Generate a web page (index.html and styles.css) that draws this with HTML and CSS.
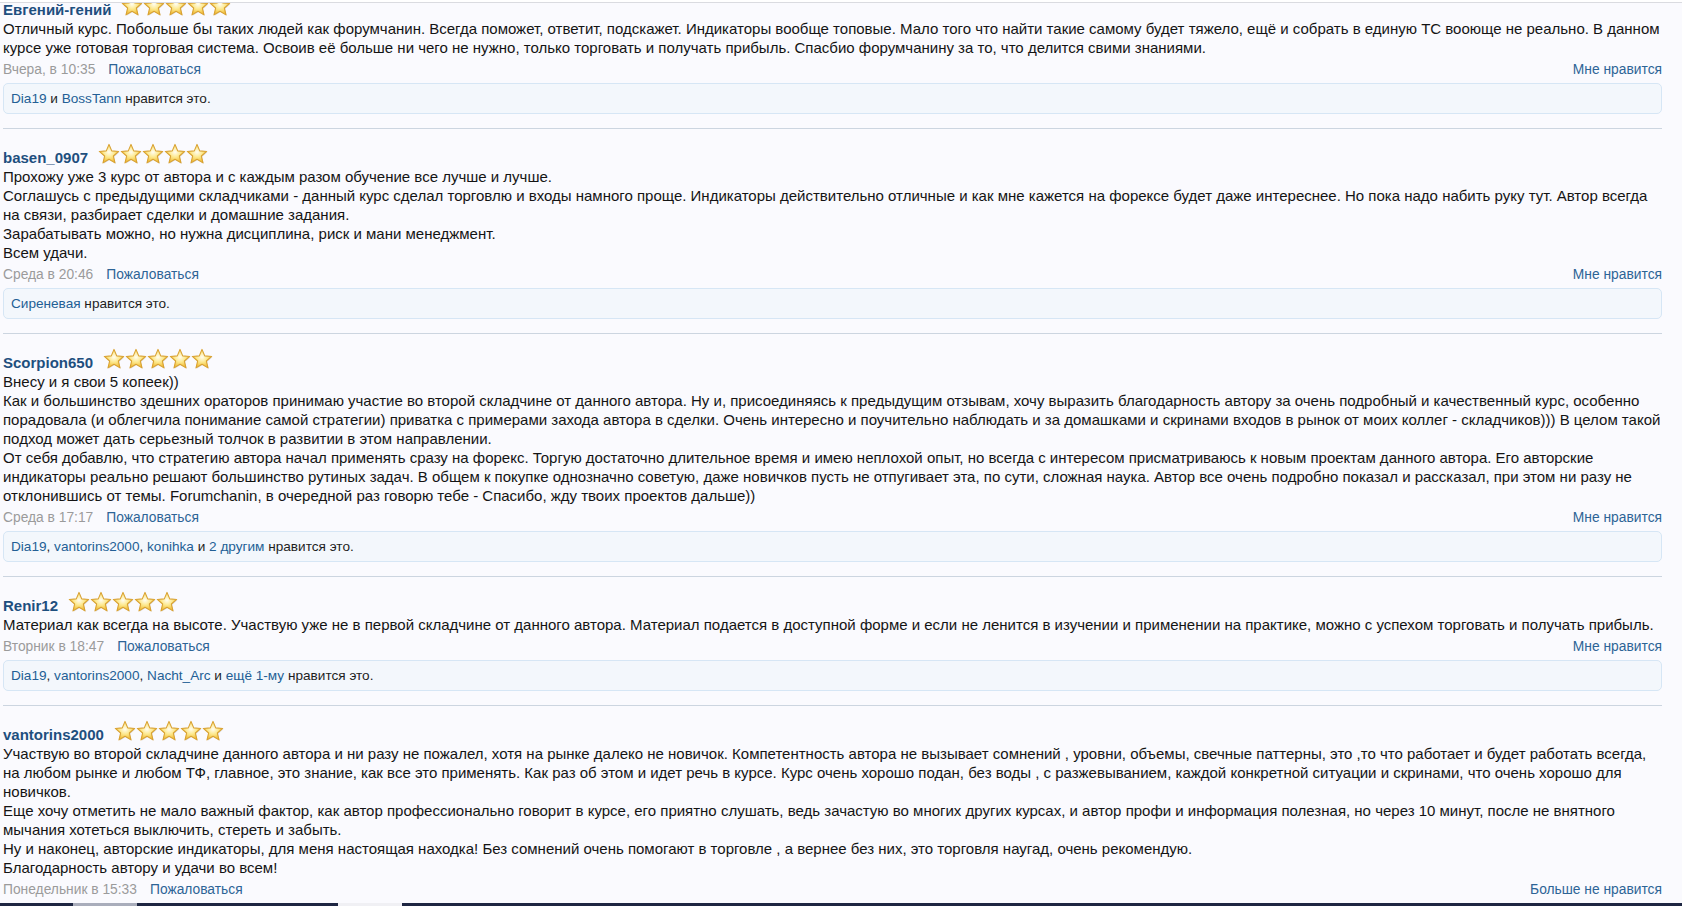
FILE: index.html
```html
<!DOCTYPE html>
<html lang="ru">
<head>
<meta charset="utf-8">
<title>Отзывы</title>
<link rel="stylesheet" href="styles.css">
</head>
<body>
<svg class="defs" width="0" height="0" aria-hidden="true">
  <defs>
    <radialGradient id="starFill" cx="0.5" cy="0.42" r="0.6">
      <stop offset="0" stop-color="#fffdf2"/>
      <stop offset="0.45" stop-color="#fde98f"/>
      <stop offset="1" stop-color="#f0b628"/>
    </radialGradient>
    <symbol id="star" viewBox="0 0 22 22">
      <polygon points="11,1.4 13.7,7.88 20.7,8.45 15.38,13.02 17,19.85 11,16.2 5,19.85 6.62,13.02 1.3,8.45 8.3,7.88" fill="#000" opacity="0.12" transform="translate(0.7 0.9)"/>
      <polygon points="11,1.4 13.7,7.88 20.7,8.45 15.38,13.02 17,19.85 11,16.2 5,19.85 6.62,13.02 1.3,8.45 8.3,7.88" fill="url(#starFill)" stroke="#d9a232" stroke-width="1.1" stroke-linejoin="round"/>
    </symbol>
  </defs>
</svg>

<div class="topline"></div>

<main class="thread">
  <article class="msg">
    <div class="head"><a class="user" href="#">Евгений-гений</a><span class="stars"><svg><use href="#star"/></svg><svg><use href="#star"/></svg><svg><use href="#star"/></svg><svg><use href="#star"/></svg><svg><use href="#star"/></svg></span></div>
    <div class="body">Отличный курс. Побольше бы таких людей как форумчанин. Всегда поможет, ответит, подскажет. Индикаторы вообще топовые. Мало того что найти такие самому будет тяжело, ещё и собрать в единую ТС вооюще не реально. В данном курсе уже готовая торговая система. Освоив её больше ни чего не нужно, только торговать и получать прибыль. Спасбио форумчанину за то, что делится свими знаниями.</div>
    <div class="meta"><span class="date">Вчера, в 10:35</span><a class="report" href="#">Пожаловаться</a><a class="like" href="#">Мне нравится</a></div>
    <div class="likes"><a href="#">Dia19</a> и <a href="#">BossTann</a> нравится это.</div>
  </article>

  <article class="msg">
    <div class="head"><a class="user" href="#">basen_0907</a><span class="stars"><svg><use href="#star"/></svg><svg><use href="#star"/></svg><svg><use href="#star"/></svg><svg><use href="#star"/></svg><svg><use href="#star"/></svg></span></div>
    <div class="body">Прохожу уже 3 курс от автора и с каждым разом обучение все лучше и лучше.<br>Соглашусь с предыдущими складчиками - данный курс сделал торговлю и входы намного проще. Индикаторы действительно отличные и как мне кажется на форексе будет даже интереснее. Но пока надо набить руку тут. Автор всегда на связи, разбирает сделки и домашние задания.<br>Зарабатывать можно, но нужна дисциплина, риск и мани менеджмент.<br>Всем удачи.</div>
    <div class="meta"><span class="date">Среда в 20:46</span><a class="report" href="#">Пожаловаться</a><a class="like" href="#">Мне нравится</a></div>
    <div class="likes"><a href="#">Сиреневая</a> нравится это.</div>
  </article>

  <article class="msg">
    <div class="head"><a class="user" href="#">Scorpion650</a><span class="stars"><svg><use href="#star"/></svg><svg><use href="#star"/></svg><svg><use href="#star"/></svg><svg><use href="#star"/></svg><svg><use href="#star"/></svg></span></div>
    <div class="body">Внесу и я свои 5 копеек))<br>Как и большинство здешних ораторов принимаю участие во второй складчине от данного автора. Ну и, присоединяясь к предыдущим отзывам, хочу выразить благодарность автору за очень подробный и качественный курс, особенно порадовала (и облегчила понимание самой стратегии) приватка с примерами захода автора в сделки. Очень интересно и поучительно наблюдать и за домашками и скринами входов в рынок от моих коллег - складчиков))) В целом такой подход может дать серьезный толчок в развитии в этом направлении.<br>От себя добавлю, что стратегию автора начал применять сразу на форекс. Торгую достаточно длительное время и имею неплохой опыт, но всегда с интересом присматриваюсь к новым проектам данного автора. Его авторские индикаторы реально решают большинство рутиных задач. В общем к покупке однозначно советую, даже новичков пусть не отпугивает эта, по сути, сложная наука. Автор все очень подробно показал и рассказал, при этом ни разу не отклонившись от темы. Forumchanin, в очередной раз говорю тебе - Спасибо, жду твоих проектов дальше))</div>
    <div class="meta"><span class="date">Среда в 17:17</span><a class="report" href="#">Пожаловаться</a><a class="like" href="#">Мне нравится</a></div>
    <div class="likes"><a href="#">Dia19</a>, <a href="#">vantorins2000</a>, <a href="#">konihka</a> и <a href="#">2 другим</a> нравится это.</div>
  </article>

  <article class="msg">
    <div class="head"><a class="user" href="#">Renir12</a><span class="stars"><svg><use href="#star"/></svg><svg><use href="#star"/></svg><svg><use href="#star"/></svg><svg><use href="#star"/></svg><svg><use href="#star"/></svg></span></div>
    <div class="body">Материал как всегда на высоте. Участвую уже не в первой складчине от данного автора. Материал подается в доступной форме и если не ленится в изучении и применении на практике, можно с успехом торговать и получать прибыль.</div>
    <div class="meta"><span class="date">Вторник в 18:47</span><a class="report" href="#">Пожаловаться</a><a class="like" href="#">Мне нравится</a></div>
    <div class="likes"><a href="#">Dia19</a>, <a href="#">vantorins2000</a>, <a href="#">Nacht_Arc</a> и <a href="#">ещё 1-му</a> нравится это.</div>
  </article>

  <article class="msg">
    <div class="head"><a class="user" href="#">vantorins2000</a><span class="stars"><svg><use href="#star"/></svg><svg><use href="#star"/></svg><svg><use href="#star"/></svg><svg><use href="#star"/></svg><svg><use href="#star"/></svg></span></div>
    <div class="body">Участвую во второй складчине данного автора и ни разу не пожалел, хотя на рынке далеко не новичок. Компетентность автора не вызывает сомнений , уровни, объемы, свечные паттерны, это ,то что работает и будет работать всегда, на любом рынке и любом ТФ, главное, это знание, как все это применять. Как раз об этом и идет речь в курсе. Курс очень хорошо подан, без воды , с разжевыванием, каждой конкретной ситуации и скринами, что очень хорошо для новичков.<br>Еще хочу отметить не мало важный фактор, как автор профессионально говорит в курсе, его приятно слушать, ведь зачастую во многих других курсах, и автор профи и информация полезная, но через 10 минут, после не внятного мычания хотеться выключить, стереть и забыть.<br>Ну и наконец, авторские индикаторы, для меня настоящая находка! Без сомнений очень помогают в торговле , а вернее без них, это торговля наугад, очень рекомендую.<br>Благодарность автору и удачи во всем!</div>
    <div class="meta"><span class="date">Понедельник в 15:33</span><a class="report" href="#">Пожаловаться</a><a class="like" href="#">Больше не нравится</a></div>
    <div class="likes"><a href="#">Вам</a> нравится это.</div>
  </article>
</main>

<div class="taskbar"><span class="tb-gap1"></span><span class="tb-item grey"></span><span class="tb-gap2"></span><span class="tb-item white"></span></div>
</body>
</html>
```

FILE: styles.css
```css
html, body {
  margin: 0;
  padding: 0;
  background: #fafafe;
  overflow: hidden;
}

body {
  font-family: "Liberation Sans", Arial, sans-serif;
  color: #141414;
  font-size: 15px;
  line-height: 19px;
}

a {
  color: #235f95;
  text-decoration: none;
}

.defs {
  position: absolute;
  width: 0;
  height: 0;
}

.topline {
  position: fixed;
  top: 0;
  left: 0;
  right: 0;
  height: 2px;
  background: #ffffff;
  border-bottom: 1px solid #dadbe0;
  z-index: 5;
}

.thread {
  margin: -19px 20px 0 3px;
}

.msg {
  padding: 16px 0 14px;
  border-bottom: 1px solid #ccd5e0;
}

.msg:last-child {
  border-bottom: none;
}

.head {
  display: flex;
  align-items: flex-start;
  height: 22px;
}

.user {
  font-weight: bold;
  color: #1e4f7e;
  padding-top: 3px;
  line-height: 19px;
}

.stars {
  display: flex;
  margin: -2px 0 0 10px;
}

.stars svg {
  width: 22px;
  height: 22px;
  display: block;
}

.body {
  color: #141414;
}

.meta {
  display: flex;
  font-size: 13.8px;
  line-height: 17px;
  margin-top: 4px;
}

.date {
  color: #9b9b9b;
}

.report {
  margin-left: 13px;
  color: #2d6496;
}

.like {
  margin-left: auto;
  color: #2d6496;
}

.likes {
  margin-top: 5px;
  padding: 6px 7px;
  font-size: 13.6px;
  line-height: 17px;
  background: #f3f7fc;
  border: 1px solid #d6e6f5;
  border-radius: 5px;
  color: #1e1e1e;
}

.likes a {
  color: #235f95;
}

.taskbar {
  position: fixed;
  left: 0;
  right: 0;
  bottom: 0;
  height: 3px;
  background: #1e2642;
  display: flex;
  z-index: 5;
}

.tb-gap1 { width: 73px; }
.tb-gap2 { width: 201px; }

.tb-item {
  width: 64px;
  height: 3px;
}

.tb-item.grey { background: #a9adbb; }
.tb-item.white { background: #f0f0f4; }
```
